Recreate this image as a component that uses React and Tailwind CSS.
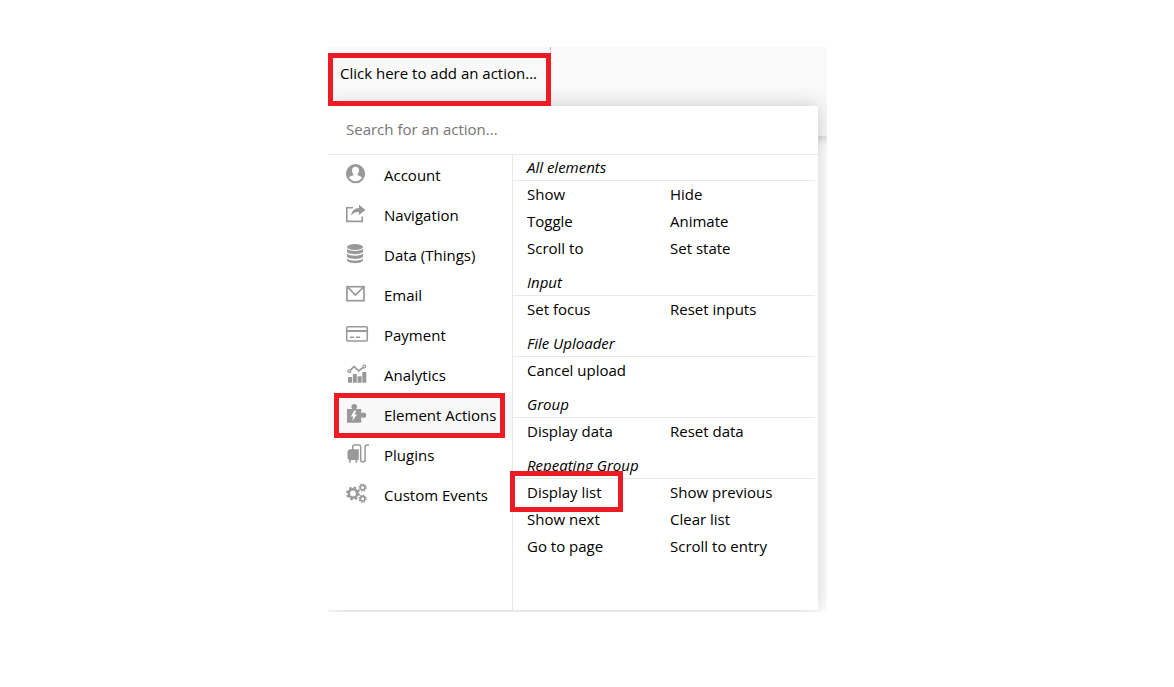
const menuItems = [
  { label: "Account", icon: AccountIcon },
  { label: "Navigation", icon: NavigationIcon },
  { label: "Data (Things)", icon: DataIcon },
  { label: "Email", icon: EmailIcon },
  { label: "Payment", icon: PaymentIcon },
  { label: "Analytics", icon: AnalyticsIcon },
  { label: "Element Actions", icon: ElementIcon, active: true },
  { label: "Plugins", icon: PluginsIcon },
  { label: "Custom Events", icon: EventsIcon },
];

const sections = [
  { title: "All elements", actions: ["Show", "Hide", "Toggle", "Animate", "Scroll to", "Set state"] },
  { title: "Input", actions: ["Set focus", "Reset inputs"] },
  { title: "File Uploader", actions: ["Cancel upload"] },
  { title: "Group", actions: ["Display data", "Reset data"] },
  {
    title: "Repeating Group",
    actions: ["Display list", "Show previous", "Show next", "Clear list", "Go to page", "Scroll to entry"],
  },
];

function Icon({ children }) {
  return (
    <svg viewBox="0 0 24 24" className="mb-[2px] h-6 w-6 shrink-0 text-[#999]" fill="none" stroke="currentColor" aria-hidden="true">
      {children}
    </svg>
  );
}

function AccountIcon() {
  return (
    <Icon>
      <circle cx="10.5" cy="11.7" r="9.6" fill="currentColor" stroke="none" />
      <path
        d="M10.5 4.800c2.200 0 3.500 1.500 3.500 3.600 0 1.600-.6 2.700-1.400 3.500v1.300c2 .6 3.800 1.300 4.500 2.400a7.900 7.900 0 0 1-13.200 0c.7-1.100 2.500-1.800 4.500-2.400v-1.300C7.600 11.100 7 10 7 8.400c0-2.100 1.300-3.600 3.500-3.600z"
        fill="#fff"
        stroke="none"
      />
    </Icon>
  );
}

function NavigationIcon() {
  return (
    <Icon>
      <path d="M8 5.700H1.800v13.700h15.400V14.500" strokeWidth="1.600" />
      <path d="M14 2.800l6.500 5.200-6.500 5v-3c-3.500-.2-5.700.8-7.800 3.500.6-4.600 3.300-7.200 7.800-7.400z" fill="currentColor" stroke="none" />
    </Icon>
  );
}

function DataIcon() {
  return (
    <Icon>
      <g fill="currentColor" stroke="none">
        <ellipse cx="10" cy="5" rx="8" ry="3" />
        <path d="M2 6.800c2 2.800 14 2.800 16 0v3c-1 3.200-15 3.200-16 0z" />
        <path d="M2 11.600c2 2.800 14 2.800 16 0v3c-1 3.200-15 3.200-16 0z" />
        <path d="M2 16.400c2 2.800 14 2.800 16 0v2.200c-1 3.400-15 3.400-16 0z" />
      </g>
    </Icon>
  );
}

function EmailIcon() {
  return (
    <Icon>
      <rect x="2" y="4.700" width="17" height="14" strokeWidth="1.700" />
      <path d="M2.500 5.200l8 7.800 8-7.800" strokeWidth="1.700" />
    </Icon>
  );
}

function PaymentIcon() {
  return (
    <Icon>
      <rect x="1.700" y="4.700" width="20.600" height="14.400" rx="1" strokeWidth="1.500" />
      <path d="M1.500 9h21" strokeWidth="2" />
      <path d="M5 15.300h4M11 15.300h4" strokeWidth="1.400" />
    </Icon>
  );
}

function AnalyticsIcon() {
  return (
    <Icon>
      <path d="M3 20.800v-5.800h4v5.800zM7.800 20.800v-8.800h4v8.800zM12.600 20.800v-6.500h4v6.500zM17.300 20.800v-10.800h4v10.800z" fill="currentColor" stroke="none" />
      <path d="M5.300 8.300l3.700-3.800 4.700 4.500 4.600-3.600" strokeWidth="1.700" />
      <circle cx="4.300" cy="9.300" r="1.400" strokeWidth="1.200" />
      <circle cx="19.300" cy="4.600" r="1.400" strokeWidth="1.200" />
    </Icon>
  );
}

function ElementIcon() {
  return (
    <Icon>
      <path
        d="M2 7h5.200c-.5-.8-.8-1.500-.8-2.200a2.800 2.800 0 0 1 5.600 0c0 .7-.3 1.400-.8 2.200h5v4.500c.9-.7 1.500-.9 2.300-.9a2.700 2.700 0 0 1 0 5.400c-.8 0-1.400-.2-2.300-.9V20.800H2z"
        fill="currentColor"
        stroke="none"
      />
      <path d="M9.500 8.500l-3.700 6h2.500L7.300 19l4.700-6.500H9.300l2-4z" fill="#fff" stroke="none" />
    </Icon>
  );
}

function PluginsIcon() {
  return (
    <Icon>
      <path d="M4.500 7.300h9.300V18H4.500L2.500 16.500V9zM4 17.500h1.700v3.300H4zM10.500 17.500h1.700v3.300h-1.700z" fill="currentColor" stroke="none" />
      <path d="M7.800 8V4.500q0-1.500 1.500-1.500h4.700q1.700 0 1.700 1.700V17.500q0 2.500 2.200 2.500t2.200-2.500V5.500q0-2.500 2.400-2.500h1.500" strokeWidth="1.500" />
    </Icon>
  );
}

function EventsIcon() {
  return (
    <Icon>
      <circle cx="8" cy="11.400" r="4.200" strokeWidth="2.600" />
      <circle cx="8" cy="11.400" r="5.900" strokeWidth="2" strokeDasharray="2.400 2.234" />
      <circle cx="17.600" cy="5.600" r="2.300" strokeWidth="1.600" />
      <circle cx="17.600" cy="5.600" r="3.500" strokeWidth="1.400" strokeDasharray="1.400 1.349" />
      <circle cx="17.600" cy="16.700" r="2.300" strokeWidth="1.600" />
      <circle cx="17.600" cy="16.700" r="3.500" strokeWidth="1.400" strokeDasharray="1.400 1.349" />
    </Icon>
  );
}

function Highlight({ className }) {
  return <span className={`pointer-events-none absolute z-10 border-5 border-[#ed1c24] ${className}`} />;
}

function ActionSection({ title, actions }) {
  return (
    <section>
      <h3 className="h-[26px] border-b border-[#e8e8e8] pl-[14px] leading-6 italic">{title}</h3>
      <div className="grid grid-cols-[143px_1fr] pl-[14px]">
        {actions.map((action) => (
          <button key={action} type="button" className="relative h-[27px] pb-[2px] text-left">
            {action}
            {action === "Display list" && <Highlight className="-top-2 -left-[17px] h-[41px] w-[113px]" />}
          </button>
        ))}
      </div>
    </section>
  );
}

export default function App() {
  return (
    <main className="flex min-h-screen justify-center bg-white pt-[47px] pr-[19px] font-['Open_Sans',sans-serif] text-[15px] leading-5 text-black">
      <div className="relative w-[499px] max-w-full self-start overflow-hidden pb-[2px]">
        {/* --- Workflow strip behind the menu --- */}
        <div className="absolute inset-x-0 top-0 h-[89px] bg-[#f9f9f9] shadow-[0_2px_10px_rgba(0,0,0,0.25)]" />

        <div className="relative h-[59px] w-[223px] border-r border-dashed border-[#bbb] pt-[6px]">
          <button type="button" className="block h-10 w-full pl-3 text-left whitespace-nowrap">
            Click here to add an action...
          </button>
          <Highlight className="top-[6px] left-0 h-[53px] w-[223px]" />
        </div>

        {/* --- Action menu --- */}
        <div className="relative mr-[9px] rounded-[2px] bg-white shadow-[0_0_20px_rgba(0,0,0,0.2)]">
          <input
            type="text"
            aria-label="Search for an action"
            placeholder="Search for an action..."
            className="block h-[49px] w-full border-b border-[#e8e8e8] px-[18px] pb-[2px] outline-none placeholder:text-[#757575]"
          />
          <div className="flex">
            <nav className="w-[185px] shrink-0 border-r border-[#e8e8e8]">
              {menuItems.map(({ label, icon: ItemIcon, active }) => (
                <button
                  key={label}
                  type="button"
                  className={`relative flex h-10 w-full items-center gap-[15px] pl-[17px] text-left whitespace-nowrap ${active ? "bg-[#f8f8f8]" : ""}`}
                >
                  <ItemIcon />
                  {label}
                  {active && <Highlight className="-top-[2px] left-[6px] h-[45px] w-[171px]" />}
                </button>
              ))}
            </nav>
            <div className="flex flex-1 flex-col gap-2 pr-[3px] pb-[50px]">
              {sections.map((section) => (
                <ActionSection key={section.title} {...section} />
              ))}
            </div>
          </div>
        </div>
      </div>
    </main>
  );
}
